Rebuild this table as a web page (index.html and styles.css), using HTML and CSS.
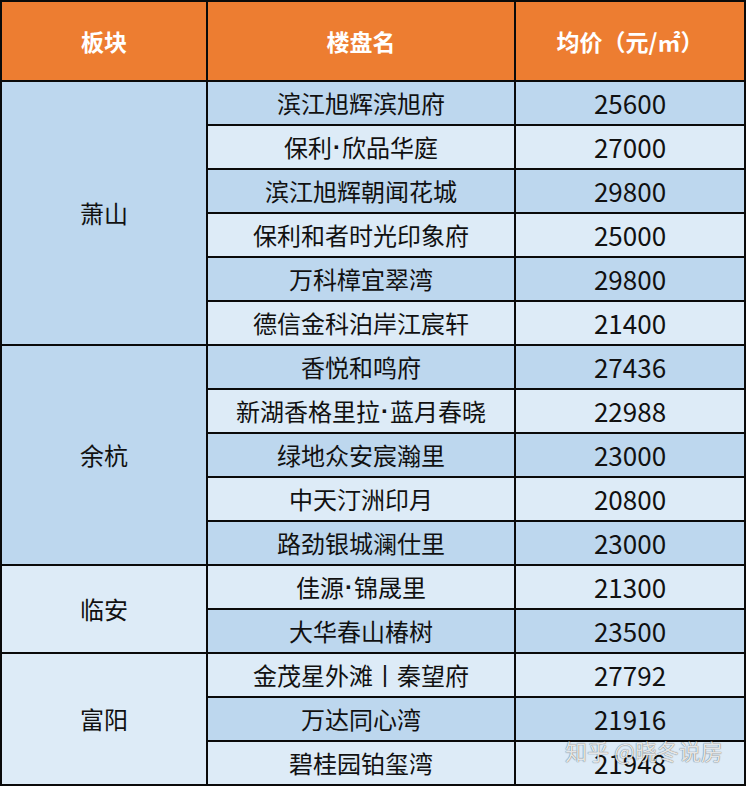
FILE: index.html
```html
<!DOCTYPE html>
<html lang="zh-CN">
<head>
<meta charset="utf-8">
<link rel="stylesheet" href="styles.css">
</head>
<body>
<div class="wrap">
  <div class="table">
    <div class="th">板块</div>
    <div class="th">楼盘名</div>
    <div class="th">均价（元/㎡）</div>

    <div class="td region dark span6">萧山</div>
    <div class="td dark">滨江旭辉滨旭府</div><div class="td num dark">25600</div>
    <div class="td light">保利<span class="dot">·</span>欣品华庭</div><div class="td num light">27000</div>
    <div class="td dark">滨江旭辉朝闻花城</div><div class="td num dark">29800</div>
    <div class="td light">保利和者时光印象府</div><div class="td num light">25000</div>
    <div class="td dark">万科樟宜翠湾</div><div class="td num dark">29800</div>
    <div class="td light">德信金科泊岸江宸轩</div><div class="td num light">21400</div>

    <div class="td region dark span5">余杭</div>
    <div class="td dark">香悦和鸣府</div><div class="td num dark">27436</div>
    <div class="td light">新湖香格里拉<span class="dot">·</span>蓝月春晓</div><div class="td num light">22988</div>
    <div class="td dark">绿地众安宸瀚里</div><div class="td num dark">23000</div>
    <div class="td light">中天汀洲印月</div><div class="td num light">20800</div>
    <div class="td dark">路劲银城澜仕里</div><div class="td num dark">23000</div>

    <div class="td region light span2">临安</div>
    <div class="td light">佳源<span class="dot">·</span>锦晟里</div><div class="td num light">21300</div>
    <div class="td dark">大华春山椿树</div><div class="td num dark">23500</div>

    <div class="td region light span3">富阳</div>
    <div class="td light">金茂星外滩丨秦望府</div><div class="td num light">27792</div>
    <div class="td dark">万达同心湾</div><div class="td num dark">21916</div>
    <div class="td light">碧桂园铂玺湾</div><div class="td num light">21948</div>
  </div>
  <div class="watermark">知乎 @晓冬说房</div>
</div>
</body>
</html>
```

FILE: styles.css
```css
html, body {
  margin: 0;
  padding: 0;
  background: #ffffff;
}

.wrap {
  position: relative;
  width: 746px;
  height: 786px;
}

.table {
  display: grid;
  grid-template-columns: 204px 306px 228px;
  grid-template-rows: 78px repeat(16, 42px);
  gap: 2px;
  padding: 2px;
  background: #0a0a0a;
  width: 742px;
  font-family: "Noto Sans CJK SC", "Noto Sans", sans-serif;
}

.th {
  background: #ed7d31;
  color: #ffffff;
  font-weight: bold;
  font-size: 23px;
  display: flex;
  align-items: center;
  justify-content: center;
}

.td {
  display: flex;
  align-items: center;
  justify-content: center;
  font-size: 24px;
  color: #111111;
  white-space: nowrap;
  padding-bottom: 1px;
}

.dot {
  font-family: "Liberation Sans", sans-serif;
  font-weight: bold;
  padding: 0 1px;
}

.num {
  font-size: 26px;
}

.dark { background: #bdd7ee; }
.light { background: #ddebf7; }

.span6 { grid-row: span 6; }
.span5 { grid-row: span 5; }
.span2 { grid-row: span 2; }
.span3 { grid-row: span 3; }

.watermark {
  position: absolute;
  left: 565px;
  top: 734px;
  font-family: "Noto Sans CJK SC", sans-serif;
  font-size: 22px;
  color: rgba(255, 255, 255, 0.85);
  text-shadow: 0 0 1px rgba(0, 0, 0, 0.5), 0 0 1px rgba(0, 0, 0, 0.35);
  white-space: nowrap;
}
```
